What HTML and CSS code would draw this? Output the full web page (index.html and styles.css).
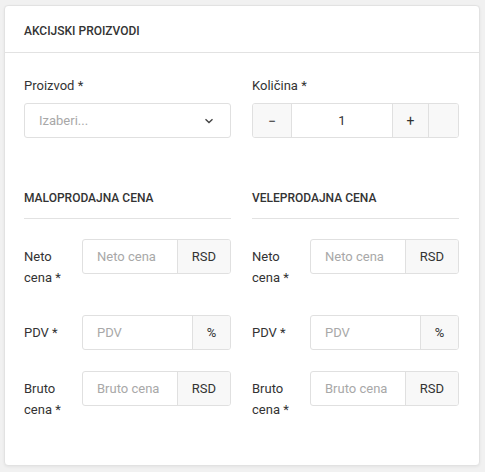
FILE: index.html
```html
<!DOCTYPE html>
<html lang="sr">
<head>
  <meta charset="UTF-8">
  <title>Akcijski proizvodi</title>
  <link rel="stylesheet" href="styles.css">
</head>
<body>
  <div class="card">
    <div class="card-header">Akcijski proizvodi</div>
    <div class="card-body">
      <div class="cols">
        <div class="field">
          <label class="top-label">Proizvod *</label>
          <div class="select">
            <span class="placeholder">Izaberi...</span>
            <svg width="10" height="6" viewBox="0 0 10 6"><path d="M1.5 1.2 5 4.5 8.5 1.2" fill="none" stroke="#444" stroke-width="1.4"/></svg>
          </div>
        </div>
        <div class="field">
          <label class="top-label">Količina *</label>
          <div class="qty">
            <span class="qty-btn minus">−</span>
            <span class="qty-val">1</span>
            <span class="qty-btn plus">+</span>
            <span class="qty-btn empty"></span>
          </div>
        </div>
      </div>

      <div class="cols prices">
        <div class="price-col">
          <h4 class="section-title">Maloprodajna cena</h4>
          <div class="row">
            <label class="row-label">Neto cena *</label>
            <div class="group"><span class="placeholder">Neto cena</span><span class="addon">RSD</span></div>
          </div>
          <div class="row">
            <label class="row-label">PDV *</label>
            <div class="group"><span class="placeholder">PDV</span><span class="addon pct">%</span></div>
          </div>
          <div class="row">
            <label class="row-label">Bruto cena *</label>
            <div class="group"><span class="placeholder">Bruto cena</span><span class="addon">RSD</span></div>
          </div>
        </div>
        <div class="price-col">
          <h4 class="section-title">Veleprodajna cena</h4>
          <div class="row">
            <label class="row-label">Neto cena *</label>
            <div class="group"><span class="placeholder">Neto cena</span><span class="addon">RSD</span></div>
          </div>
          <div class="row">
            <label class="row-label">PDV *</label>
            <div class="group"><span class="placeholder">PDV</span><span class="addon pct">%</span></div>
          </div>
          <div class="row">
            <label class="row-label">Bruto cena *</label>
            <div class="group"><span class="placeholder">Bruto cena</span><span class="addon">RSD</span></div>
          </div>
        </div>
      </div>
    </div>
  </div>
</body>
</html>
```

FILE: styles.css
```css
body { margin: 0; padding: 5px 5px 5px 4px; background: #f1f1f1; font-family: Roboto, "Liberation Sans", sans-serif; color: #333; font-size: 13px; }
.card { background: #fff; border: 1px solid #e2e2e2; border-radius: 4px; box-shadow: 0 1px 3px rgba(0,0,0,0.06); height: 461px; box-sizing: border-box; }
.card-header { padding: 17px 20px 13px 19px; line-height: 16px; font-size: 12px; font-weight: 500; text-transform: uppercase; border-bottom: 1px solid #e2e2e2; color: #333; }
.card-body { padding: 23px 20px 20px 19px; }
.cols { display: grid; grid-template-columns: 1fr 1fr; column-gap: 21px; }
.top-label { display: block; line-height: 20px; margin-bottom: 7px; }
.select { height: 35px; box-sizing: border-box; border: 1px solid #e0e0e0; border-radius: 3px; display: flex; align-items: center; justify-content: space-between; padding: 0 16px 0 14px; }
.placeholder { color: #a8a8a8; }
.qty { height: 35px; box-sizing: border-box; border: 1px solid #e0e0e0; border-radius: 3px; display: flex; overflow: hidden; }
.qty-btn { background: #f8f8f8; display: flex; align-items: center; justify-content: center; font-size: 14px; color: #333; }
.minus { width: 38px; border-right: 1px solid #e0e0e0; }
.qty-val { flex: 1; display: flex; align-items: center; justify-content: center; }
.plus { width: 35px; border-left: 1px solid #e0e0e0; border-right: 1px solid #e0e0e0; }
.empty { width: 29px; }
.prices { margin-top: 52px; }
.section-title { margin: 0 0 20px; font-size: 12px; font-weight: 500; line-height: 16px; text-transform: uppercase; padding-bottom: 12px; border-bottom: 1px solid #e2e2e2; }
.row { display: grid; grid-template-columns: 58px 1fr; margin-bottom: 21px; align-items: start; }
.row-label { line-height: 21px; padding: 7px 0 6px; }
.group { height: 35px; box-sizing: border-box; border: 1px solid #e0e0e0; border-radius: 3px; display: flex; align-items: stretch; overflow: hidden; }
.group .placeholder { flex: 1; display: flex; align-items: center; padding-left: 14px; }
.addon { background: #f8f8f8; border-left: 1px solid #e0e0e0; width: 52px; display: flex; align-items: center; justify-content: center; }
.addon.pct { width: 37px; }
```
